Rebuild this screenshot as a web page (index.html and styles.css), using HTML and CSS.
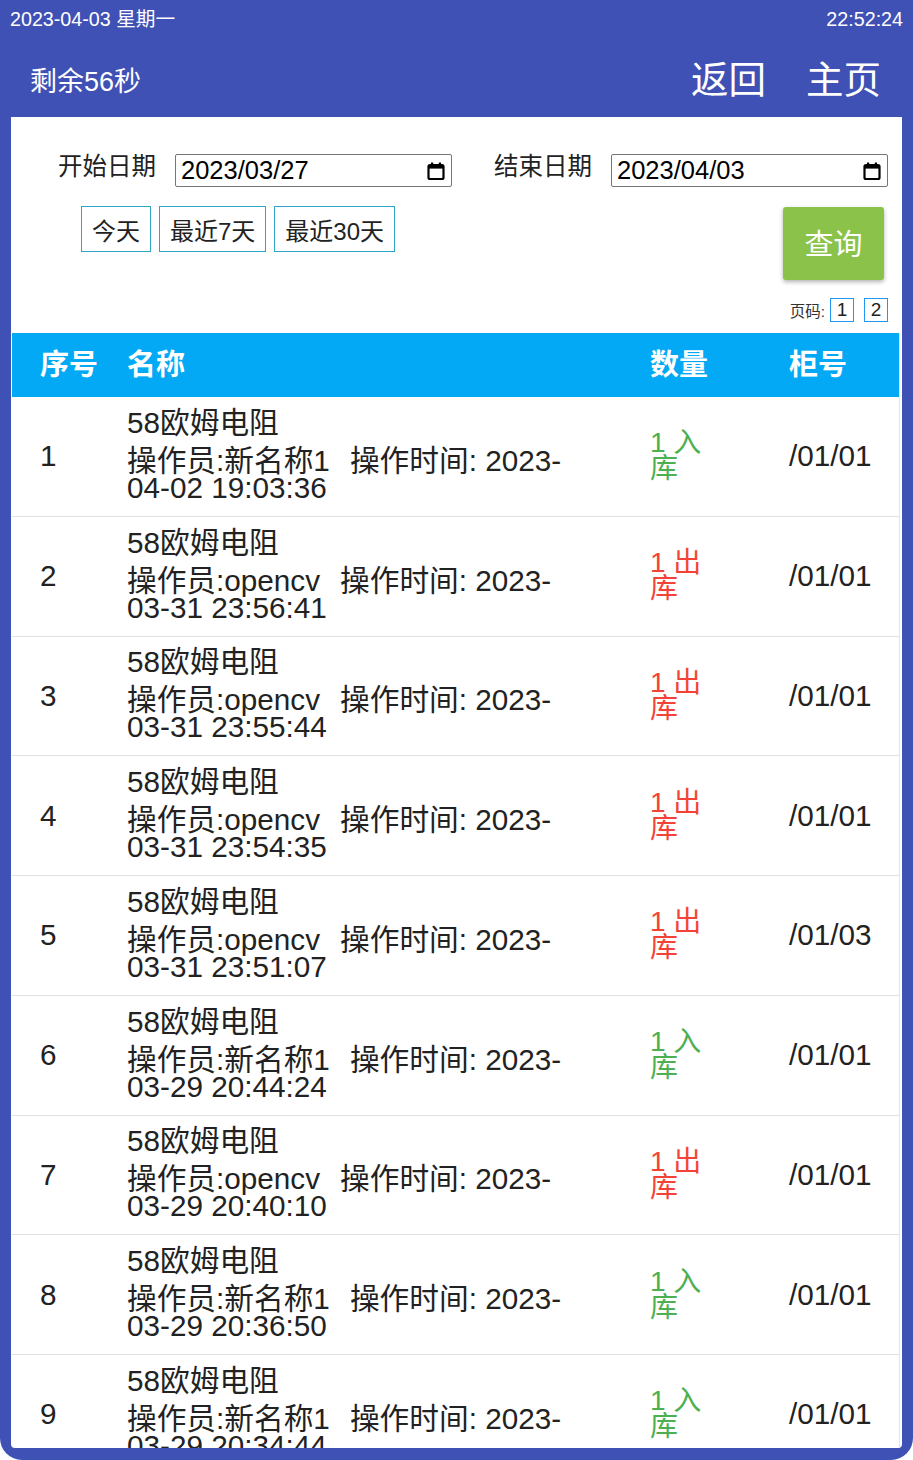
FILE: index.html
```html
<!DOCTYPE html>
<html lang="zh-CN">
<head>
    <meta charset="UTF-8">
    <meta name="viewport" content="width=device-width, initial-scale=1.0">
    <title>出入库记录</title>
    <link rel="stylesheet" href="styles.css">
</head>
<body>
    <div class="screen">
        <div class="status-bar">
            <span>2023-04-03 星期一</span>
            <span>22:52:24</span>
        </div>

        <header class="top-bar">
            <span class="countdown">剩余56秒</span>
            <nav class="nav">
                <a href="#">返回</a>
                <a href="#">主页</a>
            </nav>
        </header>

        <main class="panel">
            <div class="filter">
                <div class="date-row">
                    <div class="date-group">
                        <span class="date-label">开始日期</span>
                        <div class="date-input">
                            <span>2023/03/27</span>
                            <svg class="cal-icon" viewBox="0 0 20 20" width="20" height="20">
                                <rect x="2.5" y="4" width="15" height="14" rx="1.5" fill="none" stroke="#000" stroke-width="2.2"/>
                                <rect x="2.5" y="4" width="15" height="3.6" fill="#000"/>
                                <rect x="5" y="1.5" width="2.2" height="3.5" fill="#000"/>
                                <rect x="12.8" y="1.5" width="2.2" height="3.5" fill="#000"/>
                            </svg>
                        </div>
                    </div>
                    <div class="date-group">
                        <span class="date-label">结束日期</span>
                        <div class="date-input">
                            <span>2023/04/03</span>
                            <svg class="cal-icon" viewBox="0 0 20 20" width="20" height="20">
                                <rect x="2.5" y="4" width="15" height="14" rx="1.5" fill="none" stroke="#000" stroke-width="2.2"/>
                                <rect x="2.5" y="4" width="15" height="3.6" fill="#000"/>
                                <rect x="5" y="1.5" width="2.2" height="3.5" fill="#000"/>
                                <rect x="12.8" y="1.5" width="2.2" height="3.5" fill="#000"/>
                            </svg>
                        </div>
                    </div>
                </div>

                <div class="action-row">
                    <div class="quick-range">
                        <button class="range-btn">今天</button>
                        <button class="range-btn">最近7天</button>
                        <button class="range-btn">最近30天</button>
                    </div>
                    <button class="query-btn">查询</button>
                </div>

                <div class="pager">
                    <span class="pager-label">页码:</span>
                    <span class="page">1</span>
                    <span class="page">2</span>
                </div>
            </div>

            <div class="record-table">
                <div class="thead">
                    <span>序号</span>
                    <span>名称</span>
                    <span>数量</span>
                    <span>柜号</span>
                </div>

                <div class="row">
                    <span class="idx">1</span>
                    <div class="name-cell">
                        <div class="name">58欧姆电阻</div>
                        <div class="detail"><span class="operator">操作员:新名称1</span>操作时间: 2023-04-02 19:03:36</div>
                    </div>
                    <div class="qty in">1 入库</div>
                    <span class="cabinet">/01/01</span>
                </div>

                <div class="row">
                    <span class="idx">2</span>
                    <div class="name-cell">
                        <div class="name">58欧姆电阻</div>
                        <div class="detail"><span class="operator">操作员:opencv</span>操作时间: 2023-03-31 23:56:41</div>
                    </div>
                    <div class="qty out">1 出库</div>
                    <span class="cabinet">/01/01</span>
                </div>

                <div class="row">
                    <span class="idx">3</span>
                    <div class="name-cell">
                        <div class="name">58欧姆电阻</div>
                        <div class="detail"><span class="operator">操作员:opencv</span>操作时间: 2023-03-31 23:55:44</div>
                    </div>
                    <div class="qty out">1 出库</div>
                    <span class="cabinet">/01/01</span>
                </div>

                <div class="row">
                    <span class="idx">4</span>
                    <div class="name-cell">
                        <div class="name">58欧姆电阻</div>
                        <div class="detail"><span class="operator">操作员:opencv</span>操作时间: 2023-03-31 23:54:35</div>
                    </div>
                    <div class="qty out">1 出库</div>
                    <span class="cabinet">/01/01</span>
                </div>

                <div class="row">
                    <span class="idx">5</span>
                    <div class="name-cell">
                        <div class="name">58欧姆电阻</div>
                        <div class="detail"><span class="operator">操作员:opencv</span>操作时间: 2023-03-31 23:51:07</div>
                    </div>
                    <div class="qty out">1 出库</div>
                    <span class="cabinet">/01/03</span>
                </div>

                <div class="row">
                    <span class="idx">6</span>
                    <div class="name-cell">
                        <div class="name">58欧姆电阻</div>
                        <div class="detail"><span class="operator">操作员:新名称1</span>操作时间: 2023-03-29 20:44:24</div>
                    </div>
                    <div class="qty in">1 入库</div>
                    <span class="cabinet">/01/01</span>
                </div>

                <div class="row">
                    <span class="idx">7</span>
                    <div class="name-cell">
                        <div class="name">58欧姆电阻</div>
                        <div class="detail"><span class="operator">操作员:opencv</span>操作时间: 2023-03-29 20:40:10</div>
                    </div>
                    <div class="qty out">1 出库</div>
                    <span class="cabinet">/01/01</span>
                </div>

                <div class="row">
                    <span class="idx">8</span>
                    <div class="name-cell">
                        <div class="name">58欧姆电阻</div>
                        <div class="detail"><span class="operator">操作员:新名称1</span>操作时间: 2023-03-29 20:36:50</div>
                    </div>
                    <div class="qty in">1 入库</div>
                    <span class="cabinet">/01/01</span>
                </div>

                <div class="row">
                    <span class="idx">9</span>
                    <div class="name-cell">
                        <div class="name">58欧姆电阻</div>
                        <div class="detail"><span class="operator">操作员:新名称1</span>操作时间: 2023-03-29 20:34:44</div>
                    </div>
                    <div class="qty in">1 入库</div>
                    <span class="cabinet">/01/01</span>
                </div>
            </div>
        </main>
    </div>
</body>
</html>
```

FILE: styles.css
```css
body {
    margin: 0;
    padding: 0;
    background-color: #fff;
    font-family: 'Liberation Sans', 'Noto Sans CJK SC', sans-serif;
    color: #222;
}

.screen {
    height: 1460px;
    background-color: #3f51b5;
    border-radius: 0 0 22px 22px;
    overflow: hidden;
}

.status-bar {
    display: flex;
    justify-content: space-between;
    height: 38px;
    line-height: 38px;
    padding: 0 10px;
    font-size: 19.7px;
    color: #fff;
}

.top-bar {
    display: flex;
    justify-content: space-between;
    align-items: center;
    height: 79px;
    padding: 4px 32px 0 30px;
    box-sizing: border-box;
    color: #fff;
}

.countdown {
    font-size: 27px;
}

.nav {
    display: flex;
    gap: 40px;
}

.nav a {
    color: #fff;
    text-decoration: none;
    font-size: 37.5px;
    line-height: 40px;
}

.panel {
    margin-left: 11px;
    width: 891px;
    height: 1331px;
    background-color: #fff;
    border-radius: 0 0 4px 4px;
    overflow: hidden;
}

/* filter area */
.filter {
    padding: 37px 14px 0 0;
}

.date-row {
    display: flex;
    gap: 42px;
    padding-left: 47px;
}

.date-group {
    display: flex;
    gap: 19px;
}

.date-label {
    font-size: 24.5px;
    line-height: 26px;
    color: #222;
}

.date-input {
    display: flex;
    justify-content: space-between;
    align-items: center;
    width: 277px;
    height: 33px;
    box-sizing: border-box;
    border: 1px solid #767676;
    border-radius: 2px;
    padding: 0 5px 0 5px;
    font-size: 25.5px;
    color: #000;
}

.cal-icon {
    display: block;
}

.action-row {
    display: flex;
    justify-content: space-between;
    align-items: flex-start;
    margin-top: 19px;
    padding-left: 70px;
}

.quick-range {
    display: flex;
    gap: 8px;
}

.range-btn {
    height: 46px;
    padding: 0 10px;
    font-family: inherit;
    font-size: 24px;
    color: #222;
    background-color: #fff;
    border: 1px solid #2fa4c7;
    border-radius: 0;
}

.query-btn {
    width: 101px;
    height: 73px;
    margin-top: 1px;
    margin-right: 4px;
    padding-bottom: 4px;
    font-family: inherit;
    font-size: 29px;
    color: #fff;
    background-color: #8bc34a;
    border: none;
    border-radius: 3px;
    box-shadow: 0 2px 4px rgba(0, 0, 0, 0.3);
}

.pager {
    display: flex;
    justify-content: flex-end;
    align-items: center;
    gap: 10px;
    margin-top: 18px;
}

.pager-label {
    font-size: 15.5px;
    color: #333;
    margin-right: -5px;
}

.page {
    width: 24px;
    height: 24px;
    box-sizing: border-box;
    border: 1px solid #2196f3;
    font-size: 19px;
    line-height: 22px;
    text-align: center;
    color: #222;
}

/* table */
.record-table {
    margin: 11px 0 0 1px;
    width: 887px;
    border-right: 1px solid #e4e4e4;
}

.thead,
.row {
    display: grid;
    grid-template-columns: 87px 523px 139px 1fr;
    align-items: center;
    padding-left: 28px;
}

.thead {
    height: 64px;
    padding-bottom: 6px;
    box-sizing: border-box;
    background-color: #03a9f4;
    color: #fff;
    font-size: 29px;
    font-weight: bold;
}

.row {
    height: 119.75px;
    box-sizing: border-box;
    border-bottom: 1px solid #e0e0e0;
    font-size: 29.7px;
    color: #222;
}

.name-cell {
    max-width: 455px;
    padding-bottom: 9px;
}

.name {
    line-height: 40px;
    margin-bottom: 4px;
}

.detail {
    line-height: 27px;
}

.operator {
    margin-right: 20px;
}

.qty {
    width: 60px;
    font-size: 28px;
    line-height: 26px;
}

.qty.in {
    color: #4caf50;
}

.qty.out {
    color: #f44336;
}
```
